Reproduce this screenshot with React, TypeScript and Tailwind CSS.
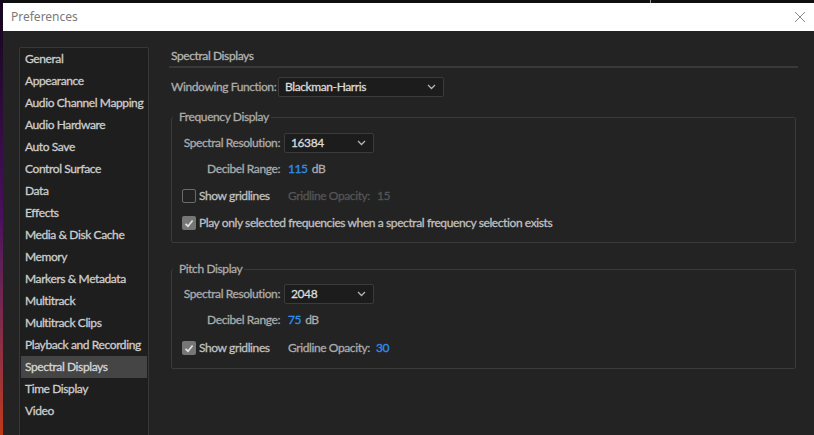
import React from "react";

const NAV = [
  "General",
  "Appearance",
  "Audio Channel Mapping",
  "Audio Hardware",
  "Auto Save",
  "Control Surface",
  "Data",
  "Effects",
  "Media & Disk Cache",
  "Memory",
  "Markers & Metadata",
  "Multitrack",
  "Multitrack Clips",
  "Playback and Recording",
  "Spectral Displays",
  "Time Display",
  "Video",
];

function Chevron() {
  return (
    <svg width="9" height="6" viewBox="0 0 9 6" className="shrink-0">
      <polyline points="1,1 4.5,4.5 8,1" fill="none" stroke="#b4b4b4" strokeWidth="1.3" />
    </svg>
  );
}

function Dropdown({ value, w }: { value: string; w: string }) {
  return (
    <div
      className={`${w} h-[20px] flex items-center justify-between pl-[6px] pr-[7px] bg-[#1c1c1c] border border-[#3b3b3b] rounded-[2px] text-[#dadada] whitespace-nowrap`}
    >
      <span>{value}</span>
      <Chevron />
    </div>
  );
}

function Checkbox({ checked }: { checked: boolean }) {
  if (checked) {
    return (
      <div className="w-[14px] h-[14px] rounded-[2px] bg-[#767676] flex items-center justify-center shrink-0">
        <svg width="10" height="9" viewBox="0 0 10 9">
          <polyline points="1.5,4.8 4,7.2 8.6,1.6" fill="none" stroke="#e4e4e4" strokeWidth="1.6" />
        </svg>
      </div>
    );
  }
  return <div className="w-[14px] h-[14px] rounded-[2px] border border-[#6a6a6a] shrink-0" />;
}

function Group({
  title,
  children,
  className,
}: {
  title: string;
  children: React.ReactNode;
  className: string;
}) {
  return (
    <div className={`relative ml-[2px] w-[625px] border border-[#3a3a3a] rounded-[2px] pl-[10px] ${className}`}>
      <span className="absolute -top-[9px] left-[1px] pl-[6px] pr-[2px] bg-[#232323] leading-[16px] text-[#ababab] whitespace-nowrap">
        {title}
      </span>
      {children}
    </div>
  );
}

function LabelRow({ label, children, className = "" }: { label: string; children: React.ReactNode; className?: string }) {
  return (
    <div className={`h-[20px] flex items-center ${className}`}>
      <span className="w-[98px] text-right text-[#ababab] shrink-0 whitespace-nowrap">{label}</span>
      {children}
    </div>
  );
}

export default function App() {
  return (
    <div className="flex w-[814px] h-[435px] overflow-hidden bg-[#0d0d0d] font-['Lato',sans-serif] text-[12px] leading-[16px] tracking-[-0.4px] [-webkit-text-stroke:0.3px_currentColor]">
      <div className="w-[3px] h-full shrink-0 bg-gradient-to-b from-[#14061c] via-[#4a0f5e] to-[#c0390f]" />
      <div className="flex flex-col flex-1 min-w-0">
        <div className="h-[3px] shrink-0 bg-[#0f0f0f] relative">
          <div className="absolute left-[647px] top-0 w-[1px] h-[3px] bg-[#9a9a9a]" />
        </div>
        <div className="h-[28px] shrink-0 bg-white flex items-center justify-between pl-[8px] pr-[8px]">
          <span className="font-['Noto_Sans',sans-serif] text-[12px] tracking-normal text-[#7a7a7a] [-webkit-text-stroke:0px]">Preferences</span>
          <svg width="12" height="12" viewBox="0 0 12 12">
            <path d="M1 1 L11 11 M11 1 L1 11" stroke="#8a8a8a" strokeWidth="1" />
          </svg>
        </div>
        <div className="flex-1 min-h-0 overflow-hidden bg-[#232323] flex items-start pl-[16px] pt-[16px]">
          <div className="w-[130px] h-[400px] shrink-0 bg-[#1e1e1e] border border-[#383838] rounded-[2px]">
            {NAV.map((n) => (
              <div
                key={n}
                className={`h-[22px] flex items-center pl-[4px] mx-[1px] whitespace-nowrap ${
                  n === "Spectral Displays" ? "bg-[#454545] text-[#d6d6d6]" : "text-[#cdcdcd]"
                }`}
              >
                {n}
              </div>
            ))}
          </div>

          <div className="ml-[20px] w-[629px] flex flex-col">
            <div className="h-[19px] pt-[1px] pl-[2px] text-[#b4b4b4]">Spectral Displays</div>
            <div className="h-[2px] bg-[#393939]" />

            <div className="mt-[9px] pl-[2px] h-[20px] flex items-center">
              <span className="w-[107px] text-[#ababab] shrink-0 whitespace-nowrap">Windowing Function:</span>
              <Dropdown value="Blackman-Harris" w="w-[166px]" />
            </div>

            <Group title="Frequency Display" className="mt-[20px] pt-[15px] pb-[9px]">
              <LabelRow label="Spectral Resolution:">
                <div className="ml-[4px]">
                  <Dropdown value="16384" w="w-[90px]" />
                </div>
              </LabelRow>
              <LabelRow label="Decibel Range:" className="mt-[6px]">
                <span className="ml-[8px] text-[#2e8ef0]">115</span>
                <span className="ml-[4px] text-[#ababab]">dB</span>
              </LabelRow>
              <div className="mt-[7px] h-[20px] flex items-center">
                <div className="w-[106px] flex items-center shrink-0">
                  <Checkbox checked={false} />
                  <span className="ml-[3px] text-[#c0c0c0] whitespace-nowrap">Show gridlines</span>
                </div>
                <span className="w-[89px] shrink-0 text-[#555555] whitespace-nowrap">Gridline Opacity:</span>
                <span className="text-[#555555]">15</span>
              </div>
              <div className="mt-[7px] h-[20px] flex items-center">
                <Checkbox checked={true} />
                <span className="ml-[3px] text-[#c0c0c0] whitespace-nowrap">
                  Play only selected frequencies when a spectral frequency selection exists
                </span>
              </div>
            </Group>

            <Group title="Pitch Display" className="mt-[26px] pt-[14px] pb-[10px]">
              <LabelRow label="Spectral Resolution:">
                <div className="ml-[4px]">
                  <Dropdown value="2048" w="w-[90px]" />
                </div>
              </LabelRow>
              <LabelRow label="Decibel Range:" className="mt-[6px]">
                <span className="ml-[8px] text-[#2e8ef0]">75</span>
                <span className="ml-[4px] text-[#ababab]">dB</span>
              </LabelRow>
              <div className="mt-[8px] h-[20px] flex items-center">
                <div className="w-[106px] flex items-center shrink-0">
                  <Checkbox checked={true} />
                  <span className="ml-[3px] text-[#c0c0c0] whitespace-nowrap">Show gridlines</span>
                </div>
                <span className="w-[88px] shrink-0 text-[#ababab] whitespace-nowrap">Gridline Opacity:</span>
                <span className="text-[#2e8ef0]">30</span>
              </div>
            </Group>
          </div>
        </div>
      </div>
    </div>
  );
}
